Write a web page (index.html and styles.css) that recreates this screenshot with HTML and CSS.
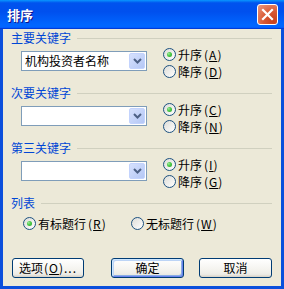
FILE: index.html
```html
<!DOCTYPE html>
<html lang="zh-CN">
<head>
    <meta charset="UTF-8">
    <meta name="viewport" content="width=device-width, initial-scale=1.0">
    <title>排序</title>
    <link rel="stylesheet" href="styles.css">
</head>
<body>
    <div class="window">
        <div class="titlebar">
            <span class="title">排序</span>
            <button class="close-btn" aria-label="关闭">
                <svg width="13" height="13" viewBox="0 0 13 13">
                    <path d="M2 2 L11 11 M11 2 L2 11" stroke="#fff" stroke-width="2.2" stroke-linecap="square" fill="none"/>
                </svg>
            </button>
        </div>

        <div class="dialog-body">
            <div class="group">
                <div class="group-head">主要关键字</div>
                <div class="group-row">
                    <div class="combo">
                        <span class="combo-text">机构投资者名称</span>
                        <span class="combo-btn">
                            <svg width="9" height="6" viewBox="0 0 9 6"><path d="M1 1 L4.5 4.5 L8 1" stroke="#4D6185" stroke-width="2" fill="none"/></svg>
                        </span>
                    </div>
                    <div class="radios">
                        <label class="radio checked"><span class="dot"></span>升序<span class="key">(<u>A</u>)</span></label>
                        <label class="radio"><span class="dot"></span>降序<span class="key">(<u>D</u>)</span></label>
                    </div>
                </div>
            </div>

            <div class="group">
                <div class="group-head">次要关键字</div>
                <div class="group-row">
                    <div class="combo">
                        <span class="combo-text"></span>
                        <span class="combo-btn">
                            <svg width="9" height="6" viewBox="0 0 9 6"><path d="M1 1 L4.5 4.5 L8 1" stroke="#4D6185" stroke-width="2" fill="none"/></svg>
                        </span>
                    </div>
                    <div class="radios">
                        <label class="radio checked"><span class="dot"></span>升序<span class="key">(<u>C</u>)</span></label>
                        <label class="radio"><span class="dot"></span>降序<span class="key">(<u>N</u>)</span></label>
                    </div>
                </div>
            </div>

            <div class="group">
                <div class="group-head">第三关键字</div>
                <div class="group-row">
                    <div class="combo">
                        <span class="combo-text"></span>
                        <span class="combo-btn">
                            <svg width="9" height="6" viewBox="0 0 9 6"><path d="M1 1 L4.5 4.5 L8 1" stroke="#4D6185" stroke-width="2" fill="none"/></svg>
                        </span>
                    </div>
                    <div class="radios">
                        <label class="radio checked"><span class="dot"></span>升序<span class="key">(<u>I</u>)</span></label>
                        <label class="radio"><span class="dot"></span>降序<span class="key">(<u>G</u>)</span></label>
                    </div>
                </div>
            </div>

            <div class="group list-group">
                <div class="group-head">列表</div>
                <div class="radios-inline">
                    <label class="radio checked wide"><span class="dot"></span>有标题行<span class="key">(<u>R</u>)</span></label>
                    <label class="radio"><span class="dot"></span>无标题行<span class="key">(<u>W</u>)</span></label>
                </div>
            </div>

            <div class="buttons">
                <button class="btn btn-options">选项<span class="key">(<u>O</u>)...</span></button>
                <button class="btn btn-ok default">确定</button>
                <button class="btn btn-cancel">取消</button>
            </div>
        </div>
    </div>
</body>
</html>
```

FILE: styles.css
```css
html, body {
    height: 100%;
    margin: 0;
    font-family: "Noto Sans CJK SC", sans-serif;
    font-size: 12px;
    color: #000;
    background-color: #fff;
}

.window {
    width: 284px;
    height: 289px;
    display: flex;
    flex-direction: column;
    background-color: #0B4FDC;
    box-sizing: border-box;
}

.titlebar {
    height: 29px;
    flex-shrink: 0;
    display: flex;
    align-items: center;
    justify-content: space-between;
    padding: 0 6px 0 7px;
    background: linear-gradient(#0997FF 0%, #0053EE 10%, #0050EE 40%, #0066FF 85%, #0066FF 92%, #005BFF 95%, #003DD7 97%, #003DD7 100%);
}

.title {
    color: #fff;
    font-weight: bold;
    font-size: 13px;
    line-height: 16px;
    text-shadow: 1px 1px #0F1089;
}

.close-btn {
    width: 21px;
    height: 21px;
    padding: 0;
    border: 1px solid #fff;
    border-radius: 3px;
    background: radial-gradient(circle at 80% 85%, #C8401C 0%, #D95A36 45%, #EB9A80 100%);
    display: flex;
    align-items: center;
    justify-content: center;
    box-sizing: border-box;
}

.dialog-body {
    flex: 1;
    margin: 0 3px 3px 3px;
    padding: 2px 9px 0 8px;
    background-color: #ECE9D8;
    display: flex;
    flex-direction: column;
}

.group {
    margin-bottom: 6px;
}

.group-head {
    display: flex;
    align-items: center;
    height: 14px;
    line-height: 14px;
    color: #0046D5;
}

.group-head::after {
    content: "";
    flex: 1;
    height: 1px;
    margin-left: 6px;
    background-color: #D0D0BF;
}

.group-row {
    display: flex;
    align-items: flex-start;
    margin-top: 1px;
    padding-left: 10px;
}

.combo {
    width: 126px;
    height: 20px;
    margin-top: 5px;
    border: 1px solid #7F9DB9;
    background-color: #fff;
    box-sizing: border-box;
    display: flex;
    padding: 1px;
}

.combo-text {
    flex: 1;
    padding-left: 2px;
    line-height: 16px;
    white-space: nowrap;
    overflow: hidden;
}

.combo-btn {
    width: 16px;
    height: 16px;
    box-sizing: border-box;
    border: 1px solid #C3D3FD;
    border-radius: 2px;
    background: linear-gradient(135deg, #D6E1FD, #B4C7F5);
    display: flex;
    align-items: center;
    justify-content: center;
}

.radios {
    margin-left: 16px;
    display: flex;
    flex-direction: column;
}

.radio {
    display: flex;
    align-items: center;
    height: 17px;
    line-height: 17px;
    white-space: nowrap;
}

.dot {
    width: 13px;
    height: 13px;
    box-sizing: border-box;
    border: 1px solid #1C5180;
    border-radius: 50%;
    background: linear-gradient(135deg, #DCDCD7, #FFFFFF);
    margin-right: 2px;
    display: flex;
    align-items: center;
    justify-content: center;
}

.radio.checked .dot::after {
    content: "";
    width: 5px;
    height: 5px;
    border-radius: 50%;
    background: radial-gradient(circle at 35% 35%, #A6E9A6 0%, #55D051 35%, #21A121 100%);
}

.key {
    margin-left: 2px;
    letter-spacing: 1px;
}

.list-group {
    margin-bottom: 0;
}

.radios-inline {
    display: flex;
    margin-top: 5px;
    padding-left: 12px;
}

.radio.wide {
    width: 108px;
}

.buttons {
    display: flex;
    margin-top: 26px;
}

.btn {
    height: 20px;
    padding: 0;
    font-family: inherit;
    font-size: 12px;
    line-height: 16px;
    color: #000;
    border: 1px solid #003C74;
    border-radius: 3px;
    background: linear-gradient(#FFFFFF 0%, #F4F3EE 60%, #ECEBE6 85%, #D6D0C5 100%);
    box-sizing: border-box;
    cursor: pointer;
}

.btn .key {
    margin-left: 1px;
}

.btn-options {
    width: 72px;
    margin-left: 1px;
}

.btn-ok {
    width: 73px;
    margin-left: 27px;
}

.btn-cancel {
    width: 73px;
    margin-left: 15px;
}

.btn.default {
    box-shadow: inset 1px 1px #CEE7FF, inset -1px -1px #6982EE, inset 2px 2px #BCD4F6, inset -2px -2px #89ADE4;
}
```
